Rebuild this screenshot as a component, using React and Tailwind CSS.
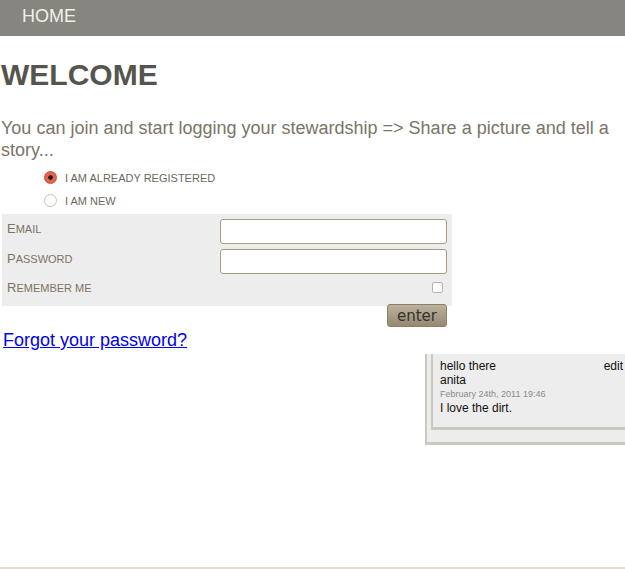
import React, { useState } from "react";

const SmallCaps = ({ first, rest }) => (
    <span className="uppercase">
        <span className="text-[13px]">{first}</span>
        <span className="text-[11px]">{rest}</span>
    </span>
);

const App = () => {
    const [mode, setMode] = useState("registered");
    const [form, setForm] = useState({ email: "", password: "", remember: false });

    const handleChange = e => {
        const { name, value, type, checked } = e.target;
        setForm({ ...form, [name]: type === "checkbox" ? checked : value });
    };

    const radioClass =
        "appearance-none w-[13px] h-[13px] m-0 rounded-full border border-[#c9c0ae] bg-white checked:border-[#c84a3a] checked:bg-[radial-gradient(circle,#1e1e1e_0_2px,#e8604c_2.5px)]";

    return (
        <div className="min-h-[569px] flex flex-col bg-white overflow-hidden font-['Liberation_Sans',Arial,sans-serif]">
            {/* Header */}
            <div className="h-[36px] bg-[#878580] pl-[22px]">
                <a href="#" className="text-[18px] leading-[32px] text-[#f3efe6]">HOME</a>
            </div>

            <h1 className="mt-[21px] ml-[1px] text-[30px] leading-[36px] font-bold text-[#55544e]">WELCOME</h1>

            <p className="mt-[24px] pl-[1px] pr-[10px] text-[18px] leading-[22px] text-[#7b7468]">
                You can join and start logging your stewardship =&gt; Share a picture and tell a story...
            </p>

            {/* Mode choice */}
            <div className="mt-[8px] pl-[44px] flex flex-col gap-[7px] text-[11px] leading-[13px] text-[#6e685e]">
                <label className="flex items-center gap-[8px]">
                    <input
                        type="radio"
                        name="mode"
                        checked={mode === "registered"}
                        onChange={() => setMode("registered")}
                        className={radioClass}
                    />
                    <span className="mt-[3px]">I AM ALREADY REGISTERED</span>
                </label>
                <label className="flex items-center gap-[8px]">
                    <input
                        type="radio"
                        name="mode"
                        checked={mode === "new"}
                        onChange={() => setMode("new")}
                        className={radioClass}
                    />
                    <span className="mt-[3px]">I AM NEW</span>
                </label>
            </div>

            {/* Login form */}
            <form className="mt-[6px] ml-[2px] w-[450px]" onSubmit={e => e.preventDefault()}>
                <div className="bg-[#ededed] pt-[5px] pb-[10px] pr-[5px] flex flex-col gap-[5px] leading-[15px] text-[#7d7363]">
                    <div className="h-[25px] flex items-start">
                        <span className="w-[218px] pl-[5px] pt-[1px]">
                            <SmallCaps first="E" rest="mail" />
                        </span>
                        <input
                            type="email"
                            name="email"
                            value={form.email}
                            onChange={handleChange}
                            className="flex-1 h-[25px] bg-white border border-[#a99b80] rounded-[3px] px-1 text-[13px]"
                        />
                    </div>
                    <div className="h-[25px] flex items-start">
                        <span className="w-[218px] pl-[5px] pt-[1px]">
                            <SmallCaps first="P" rest="assword" />
                        </span>
                        <input
                            type="password"
                            name="password"
                            value={form.password}
                            onChange={handleChange}
                            className="flex-1 h-[25px] bg-white border border-[#a99b80] rounded-[3px] px-1 text-[13px]"
                        />
                    </div>
                    <div className="h-[17px] flex items-center justify-between">
                        <span className="pl-[5px]">
                            <SmallCaps first="R" rest="emember me" />
                        </span>
                        <input
                            type="checkbox"
                            name="remember"
                            checked={form.remember}
                            onChange={handleChange}
                            className="appearance-none w-[11px] h-[11px] mr-[4px] bg-white border border-[#b9b2a4] rounded-[2px]"
                        />
                    </div>
                </div>
                <div className="flex justify-end pr-[5px]">
                    <button
                        type="submit"
                        className="-mt-[2px] w-[60px] h-[23px] rounded-[3px] border border-[#8c8069] bg-gradient-to-b from-[#bcb19c] to-[#968970] text-[15px] leading-[20px] text-[#333] font-['DejaVu_Sans',sans-serif]"
                    >
                        enter
                    </button>
                </div>
            </form>

            <a href="#" className="mt-[2px] ml-[3px] self-start text-[18px] leading-[22px] text-[#0000ee] underline">
                Forgot your password?
            </a>

            {/* Comment */}
            <div className="mt-[3px] ml-[425px] w-[260px] shrink-0 bg-[#ededed] border-l-[2px] border-b-[3px] border-[#cbc9bf] pl-[4px] pb-[12px]">
                <div className="bg-[#ededed] border-l-[2px] border-b-[3px] border-[#cbc9bf] pl-[7px] pt-[5px] pb-[12px] text-[12px] leading-[14px] text-[#111]">
                    <div className="w-[183px] flex justify-between">
                        <span>hello there</span>
                        <a href="#" className="text-[#111]">edit</a>
                    </div>
                    <div>anita</div>
                    <div className="text-[9px] leading-[14px] text-[#8a8a8a]">February 24th, 2011 19:46</div>
                    <div>I love the dirt.</div>
                </div>
            </div>

            <div className="mt-auto h-[2px] bg-[#e3dccd]" />
        </div>
    );
};

export default App;
